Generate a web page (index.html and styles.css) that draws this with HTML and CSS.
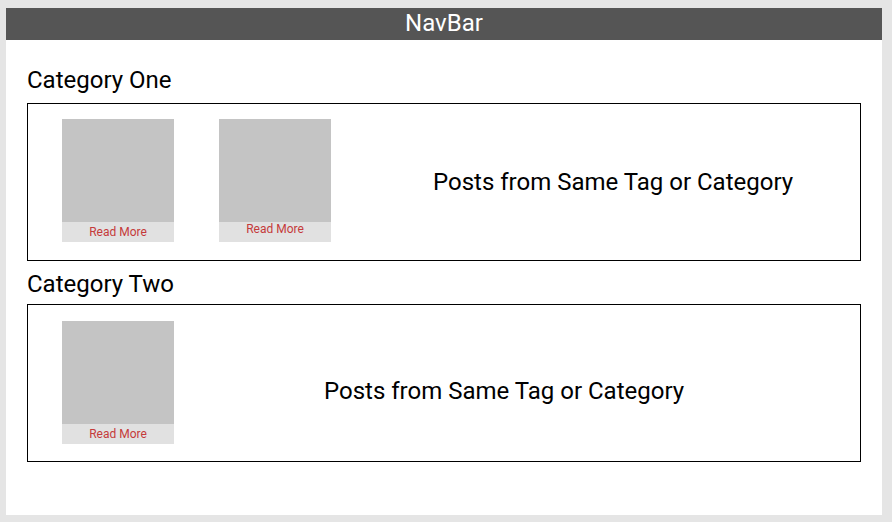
FILE: index.html
```html
<!DOCTYPE html>
<html lang="en">
<head>
<meta charset="utf-8">
<title>NavBar</title>
<link rel="stylesheet" href="styles.css">
</head>
<body>
<div class="page">
  <header class="navbar">NavBar</header>
  <main class="content">
    <h2 class="category-title category-title--one">Category One</h2>
    <section class="posts-box posts-box--one">
      <div class="cards">
        <div class="card">
          <div class="card-img"></div>
          <a class="card-link">Read More</a>
        </div>
        <div class="card">
          <div class="card-img"></div>
          <a class="card-link card-link--raised">Read More</a>
        </div>
      </div>
      <p class="posts-text">Posts from Same Tag or Category</p>
    </section>

    <h2 class="category-title category-title--two">Category Two</h2>
    <section class="posts-box posts-box--two">
      <div class="cards">
        <div class="card">
          <div class="card-img"></div>
          <a class="card-link">Read More</a>
        </div>
      </div>
      <p class="posts-text">Posts from Same Tag or Category</p>
    </section>
  </main>
</div>
</body>
</html>
```

FILE: styles.css
```css
html, body {
  margin: 0;
  padding: 0;
}

body {
  background: #e5e5e5;
  font-family: Roboto, "Liberation Sans", Arial, sans-serif;
  color: #000;
  padding-top: 8px;
}

.page {
  margin: 0 10px 0 6px;
  background: #fff;
  height: 507px;
}

.navbar {
  height: 32px;
  line-height: 30px;
  background: #555555;
  color: #fff;
  text-align: center;
  font-size: 24px;
}

.content {
  padding: 0 21px;
}

.category-title {
  font-size: 24px;
  line-height: 28px;
  font-weight: 400;
  margin: 0;
}

.category-title--one {
  padding-top: 26px;
  margin-bottom: 9px;
}

.category-title--two {
  margin-top: 9px;
  margin-bottom: 6px;
}

.posts-box {
  box-sizing: border-box;
  height: 158px;
  border: 1px solid #000;
  display: flex;
  align-items: center;
  padding-left: 34px;
}

.cards {
  display: flex;
  gap: 45px;
  align-self: flex-start;
  padding-top: 15px;
}

.posts-box--two .cards {
  padding-top: 16px;
}

.card {
  width: 112px;
}

.card-img {
  height: 103px;
  background: #c4c4c4;
}

.card-link {
  display: block;
  height: 20px;
  line-height: 20px;
  background: #e1e1e1;
  color: #c53a3a;
  font-size: 12px;
  text-align: center;
}

.card-link--raised {
  line-height: 14px;
}

.posts-text {
  margin: 0;
  font-size: 24px;
  line-height: 28px;
  white-space: nowrap;
}

.posts-box--one .posts-text {
  margin-left: 102px;
}

.posts-box--two .posts-text {
  margin-left: 150px;
  padding-top: 16px;
}
```
